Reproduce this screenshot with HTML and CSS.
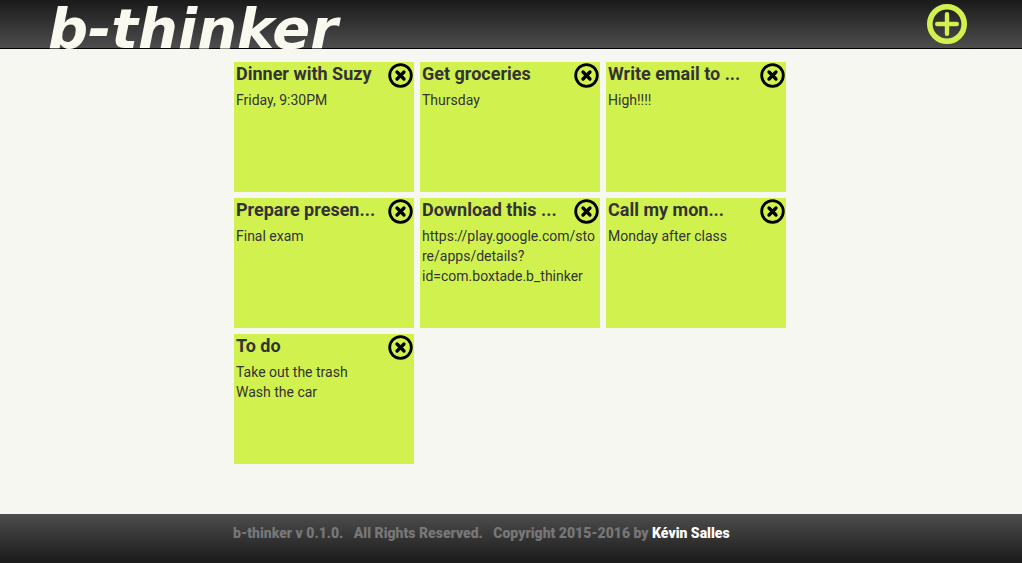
FILE: index.html
```html
<!DOCTYPE html>
<html lang="en">
<head>
<meta charset="utf-8">
<title>b-thinker</title>
<link rel="stylesheet" href="styles.css">
</head>
<body>
<svg class="symbols" aria-hidden="true">
  <symbol id="close" viewBox="0 0 25 25">
    <circle cx="12.5" cy="12.5" r="10.8" fill="none" stroke="#000" stroke-width="2.8"/>
    <path d="M9 9L16 16M16 9L9 16" fill="none" stroke="#000" stroke-width="3.3" stroke-linecap="round"/>
  </symbol>
</svg>
<header class="header">
  <h1 class="logo">b-thinker</h1>
  <button class="add" type="button" aria-label="Add note">
    <svg width="40" height="40" viewBox="0 0 40 40"><circle cx="20" cy="20" r="17.2" fill="none" stroke="#d1f24e" stroke-width="5.6"/><path d="M20 10.2V29.8M10.2 20H29.8" fill="none" stroke="#d1f24e" stroke-width="4.4" stroke-linecap="round"/></svg>
  </button>
</header>
<main class="notes">
  <article class="note">
    <div class="note-head"><h2 class="title">Dinner with Suzy</h2><button class="close" type="button" aria-label="Delete"><svg width="25" height="25"><use href="#close"/></svg></button></div>
    <p class="text">Friday, 9:30PM</p>
  </article>
  <article class="note">
    <div class="note-head"><h2 class="title">Get groceries</h2><button class="close" type="button" aria-label="Delete"><svg width="25" height="25"><use href="#close"/></svg></button></div>
    <p class="text">Thursday</p>
  </article>
  <article class="note">
    <div class="note-head"><h2 class="title">Write email to ...</h2><button class="close" type="button" aria-label="Delete"><svg width="25" height="25"><use href="#close"/></svg></button></div>
    <p class="text">High!!!!</p>
  </article>
  <article class="note">
    <div class="note-head"><h2 class="title">Prepare presen...</h2><button class="close" type="button" aria-label="Delete"><svg width="25" height="25"><use href="#close"/></svg></button></div>
    <p class="text">Final exam</p>
  </article>
  <article class="note">
    <div class="note-head"><h2 class="title">Download this ...</h2><button class="close" type="button" aria-label="Delete"><svg width="25" height="25"><use href="#close"/></svg></button></div>
    <p class="text">https://play.google.com/store/apps/details?<wbr>id=com.boxtade.b_thinker</p>
  </article>
  <article class="note">
    <div class="note-head"><h2 class="title">Call my mon...</h2><button class="close" type="button" aria-label="Delete"><svg width="25" height="25"><use href="#close"/></svg></button></div>
    <p class="text">Monday after class</p>
  </article>
  <article class="note">
    <div class="note-head"><h2 class="title">To do</h2><button class="close" type="button" aria-label="Delete"><svg width="25" height="25"><use href="#close"/></svg></button></div>
    <p class="text">Take out the trash<br>Wash the car</p>
  </article>
</main>
<footer class="footer">
  <p class="legal">b-thinker v 0.1.0. &nbsp; All Rights Reserved. &nbsp; Copyright 2015-2016 by <a class="author" href="#">Kévin Salles</a></p>
</footer>
</body>
</html>
```

FILE: styles.css
```css
* {
  box-sizing: border-box;
}

body {
  display: flex;
  flex-direction: column;
  min-height: 100vh;
  margin: 0;
  background: #f6f7f1;
  color: #333;
  font: 14px/20px Roboto, sans-serif;
}

h1,
h2,
p {
  margin: 0;
}

button {
  display: flex;
  padding: 0;
  border: 0;
  background: none;
  cursor: pointer;
}

.symbols {
  display: none;
}

.header {
  display: flex;
  justify-content: space-between;
  height: 49px;
  padding: 0 55px 0 48px;
  border-bottom: 1px solid #000;
  background: linear-gradient(#1a1a1a, #4d4d4d);
}

.logo {
  color: #f9f9f0;
  font: italic bold 56px/58px "DejaVu Sans", sans-serif;
}

.add {
  align-self: center;
}

.notes {
  display: grid;
  grid-template-columns: repeat(auto-fill, 180px);
  grid-auto-rows: 130px;
  align-content: start;
  gap: 6px;
  flex: 1;
  width: 100%;
  max-width: 554px;
  margin: 0 auto;
  padding: 13px 0 50px;
}

.note {
  overflow: hidden;
  background: #d1f24e;
}

.note-head {
  display: flex;
  justify-content: space-between;
  height: 28px;
  padding-left: 2px;
}

.title {
  font-size: 18px;
  line-height: 24px;
  font-weight: 700;
  white-space: nowrap;
}

.close {
  padding: 1px 1px 0 0;
}

.text {
  padding: 0 2px;
  overflow-wrap: anywhere;
}

.footer {
  height: 49px;
  padding: 9px 0;
  background: linear-gradient(#4d4d4d, #1a1a1a);
}

.legal {
  max-width: 556px;
  margin: 0 auto;
  color: #777;
  font-weight: 900;
}

.author {
  color: #fff;
  text-decoration: none;
}
```
